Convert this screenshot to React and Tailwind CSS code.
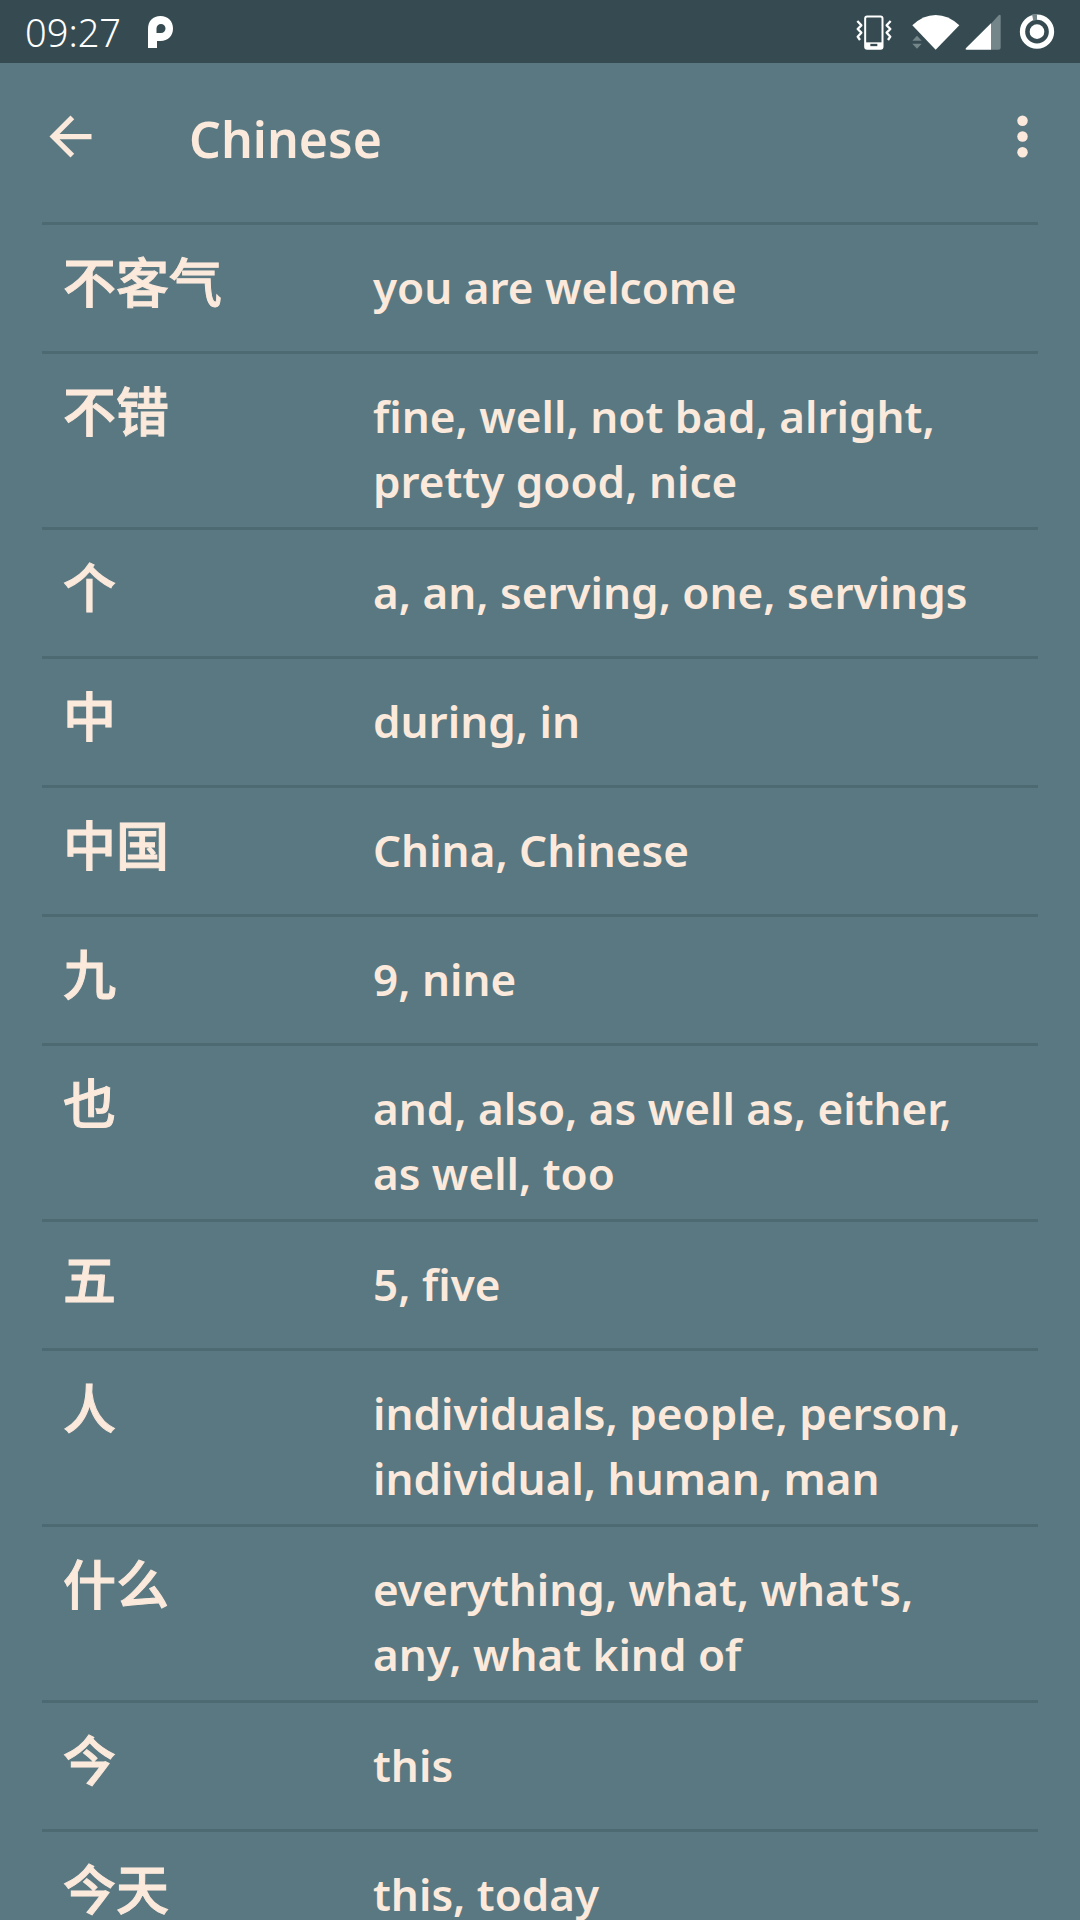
import React from "react";

const entries = [
  ["不客气", "you are welcome"],
  ["不错", "fine, well, not bad, alright, pretty good, nice"],
  ["个", "a, an, serving, one, servings"],
  ["中", "during, in"],
  ["中国", "China, Chinese"],
  ["九", "9, nine"],
  ["也", "and, also, as well as, either, as well, too"],
  ["五", "5, five"],
  ["人", "individuals, people, person, individual, human, man"],
  ["什么", "everything, what, what's, any, what kind of"],
  ["今", "this"],
  ["今天", "this, today"],
];

function PandoraIcon() {
  return (
    <svg className="h-9 w-9" viewBox="0 0 36 36" aria-hidden="true">
      <path fill="#fff" fillRule="evenodd" d="M5 34V15C5 7 10 2 17.500 2S30 7 30 14.500 25 27 17.500 27H14V34ZM18 10a4.500 4.500 0 0 0-4.500 4.500V19h4.500a4.500 4.500 0 0 0 0-9Z" />
    </svg>
  );
}

function VibrateIcon() {
  return (
    <svg className="h-9 w-9" viewBox="50 40 108 108" fill="none" stroke="#fff" aria-hidden="true">
      <rect x="77.500" y="47.500" width="52" height="97" rx="6" strokeWidth="6" />
      <path d="M77 125h53v19H77z" fill="#fff" stroke="none" />
      <path d="M93 133h21" stroke="#354b51" strokeWidth="7" />
      <path d="M54 61L66 74 55 85 66 96 55 108 62 118" strokeWidth="7" strokeLinejoin="round" />
      <path d="M154 61L142 74 153 85 142 96 153 108 146 118" strokeWidth="7" strokeLinejoin="round" />
    </svg>
  );
}

function WifiIcon() {
  return (
    <svg className="h-9 w-12" viewBox="215 40 144 108" aria-hidden="true">
      <path fill="#fff" d="M286 147L216 74Q248 43 286 43T357 74Z" />
      <path fill="#75868a" d="M216 120l14-15 14 15zM216 129h28l-14 15z" />
    </svg>
  );
}

function SignalIcon() {
  return (
    <svg className="h-9 w-9" viewBox="376 40 108 108" aria-hidden="true">
      <path fill="#75868a" d="M453 70L477 44Q483 40 483 47V141Q483 147 477 147H453Z" />
      <path fill="#fff" d="M454 68V147H381Q375 147 380 141Z" />
    </svg>
  );
}

function BatteryIcon() {
  return (
    <svg className="h-9 w-9" viewBox="537 40 108 108" aria-hidden="true">
      <circle cx="591" cy="93" r="43.500" fill="none" stroke="#fff" strokeWidth="16" />
      <path fill="#75868a" d="M576 41h15v17q-6 0-11 2z" />
      <circle cx="591" cy="93" r="22" fill="#fff" />
    </svg>
  );
}

function StatusBar() {
  return (
    <div className="flex h-[63px] items-center bg-[#354b51] px-[25px]">
      <span className="text-[38px] font-light leading-[48px] text-white">09:27</span>
      <div className="ml-[22px]"><PandoraIcon /></div>
      <div className="ml-auto flex items-center">
        <VibrateIcon />
        <div className="ml-[20px] flex gap-[5px]">
          <WifiIcon />
          <SignalIcon />
        </div>
        <div className="ml-[18px]"><BatteryIcon /></div>
      </div>
    </div>
  );
}

function AppBar() {
  return (
    <header className="flex h-[147px] items-center pl-[39px] pr-[26px]">
      <button type="button" aria-label="Back" className="size-[63px]">
        <svg viewBox="0 0 24 24" className="size-full" fill="currentColor">
          <path d="M20 11H7.830l5.590-5.590L12 4l-8 8 8 8 1.410-1.410L7.830 13H20v-2z" />
        </svg>
      </button>
      <h1 className="ml-[87px] flex-1 pt-[4px] text-[50px] font-semibold leading-[64px]">Chinese</h1>
      <button type="button" aria-label="More options" className="size-[63px]">
        <svg viewBox="0 0 24 24" className="size-full" fill="currentColor">
          <circle cx="12" cy="6" r="2" />
          <circle cx="12" cy="12" r="2" />
          <circle cx="12" cy="18" r="2" />
        </svg>
      </button>
    </header>
  );
}

export default function App() {
  return (
    <div className="h-screen overflow-hidden bg-[#597882] font-['Noto_Sans','Noto_Sans_CJK_SC',sans-serif] text-[#fbe9dc]">
      <StatusBar />
      <AppBar />
      <main className="px-[42px] pt-3">
        <table className="w-full table-fixed border-separate border-spacing-0 text-left">
          <tbody>
            {entries.map(([word, meaning]) => (
              <tr key={word}>
                <th
                  scope="row"
                  lang="zh-CN"
                  className="h-[129px] w-[331px] border-t-[3px] border-[#4d6a72] pl-[21px] pt-[23px] align-top font-['Noto_Sans_CJK_SC',sans-serif] text-[53px] font-medium leading-[65px] [-webkit-text-stroke:1px_#fbe9dc]"
                >
                  {word}
                </th>
                <td className="border-t-[3px] border-[#4d6a72] pb-[13px] pr-[42px] pt-[30px] align-top text-[44px] font-semibold leading-[65px]">
                  {meaning}
                </td>
              </tr>
            ))}
          </tbody>
        </table>
      </main>
    </div>
  );
}
